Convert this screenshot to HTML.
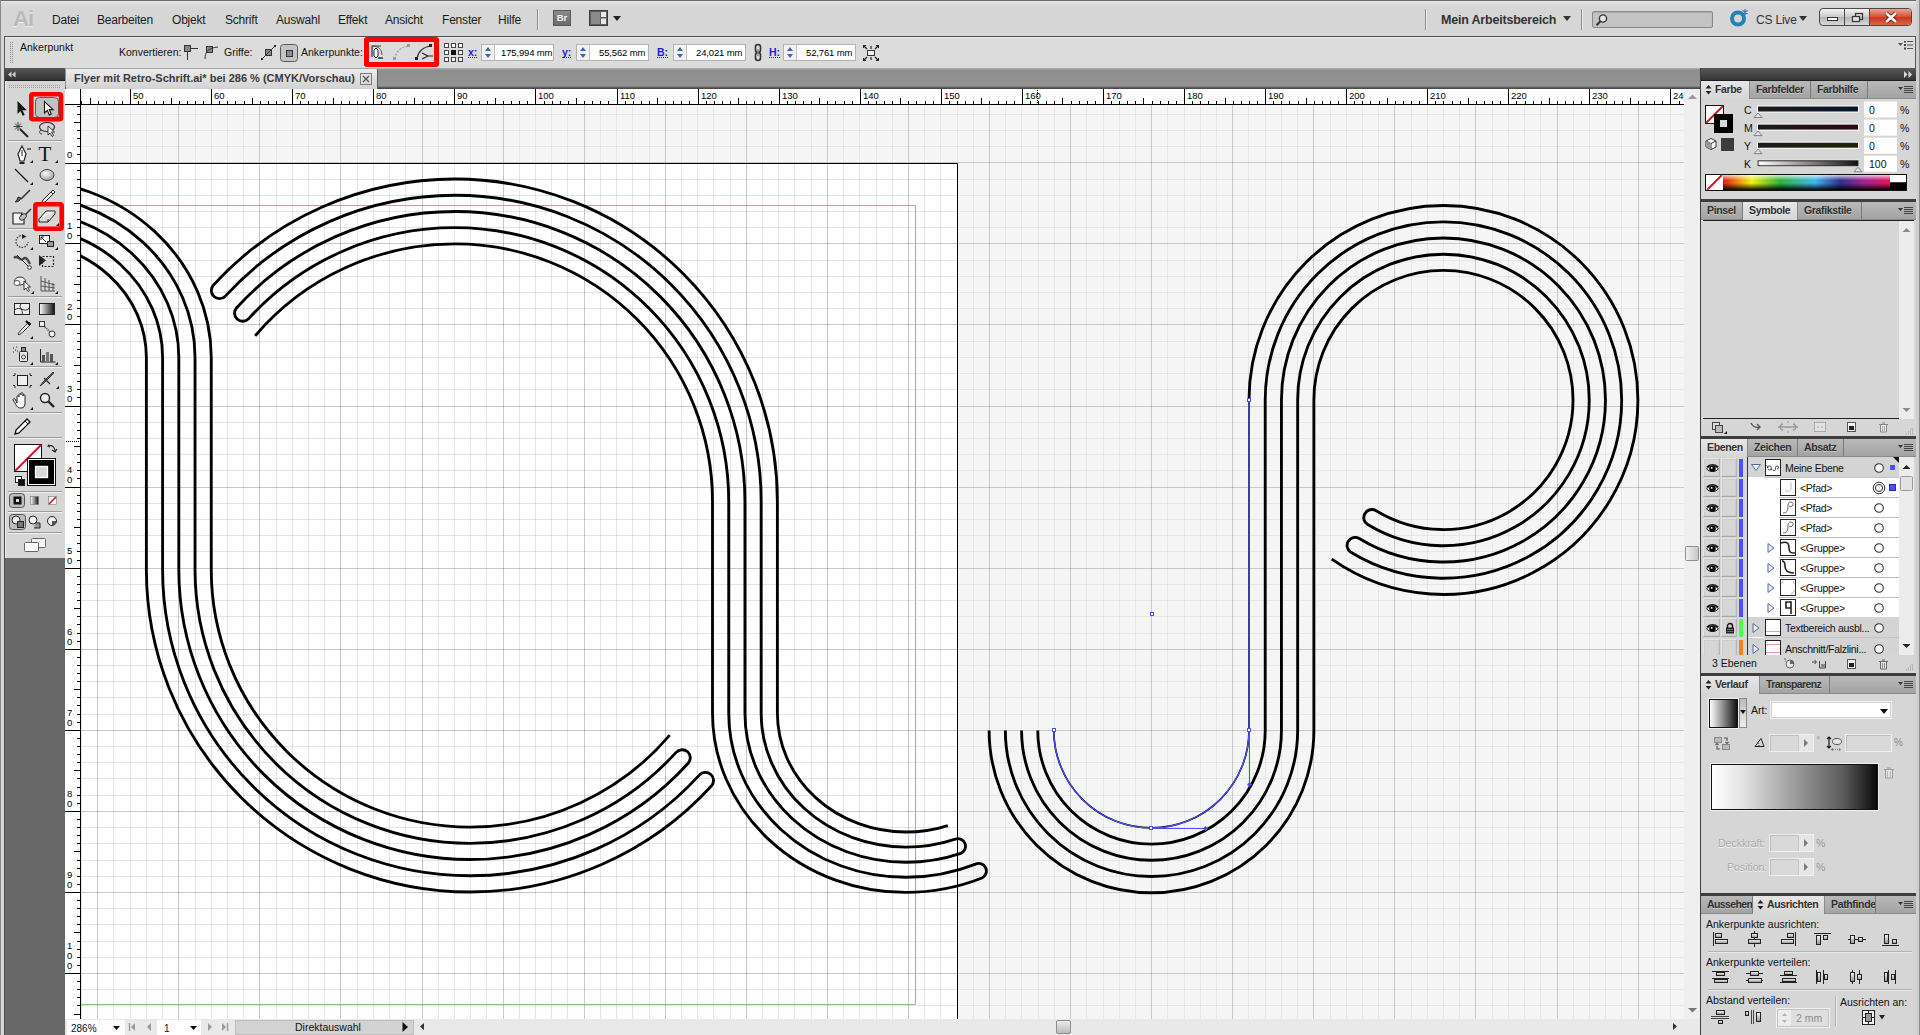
<!DOCTYPE html>
<html lang="de"><head><meta charset="utf-8"><title>Adobe Illustrator</title>
<style>
html,body{margin:0;padding:0;}
body{width:1920px;height:1035px;overflow:hidden;background:#d6d6d6;font-family:"Liberation Sans",sans-serif;font-size:11px;color:#111;}
#app{position:relative;width:1920px;height:1035px;overflow:hidden;background:#d6d6d6;}
.abs{position:absolute;}
/* ---------- top bars ---------- */
#winborder-top{position:absolute;left:0;top:0;width:1920px;height:1px;background:#6b6b6b;}
#winborder-l{position:absolute;left:0;top:0;width:1px;height:1035px;background:#8a8a8a;}
#winborder-r{position:absolute;left:1916px;top:0;width:4px;height:1035px;background:#cfcfcf;border-right:1px solid #8a8a8a;box-sizing:border-box;}
#menubar{position:absolute;left:1px;top:1px;width:1915px;height:35px;background:linear-gradient(#e6e6e6 0,#dadada 3px,#d6d6d6 8px,#d6d6d6 100%);}
#menubar .mi{position:absolute;top:11.5px;font-size:12px;letter-spacing:-0.2px;color:#1a1a1a;line-height:14px;white-space:nowrap;}
.vsep{position:absolute;width:1px;background:#8e8e8e;box-shadow:1px 0 0 #e9e9e9;}
#ctrlbar{position:absolute;left:4px;top:36px;width:1912px;height:32px;background:#dcdcdc;border-top:1px solid #4f4f4f;border-left:1px solid #5a5a5a;border-right:1px solid #5a5a5a;box-sizing:border-box;box-shadow:inset 0 1px 0 #ececec;}
#ctrlbar .t{position:absolute;font-size:10.5px;color:#111;white-space:nowrap;line-height:12px;}
#ctrlbar .lnk{position:absolute;font-size:10.5px;color:#2222d8;font-weight:bold;white-space:nowrap;line-height:12px;border-bottom:1px dotted #2222d8;height:11px;}
.fld{position:absolute;top:7px;height:17px;width:73px;background:#fff;border:1px solid #b4b4b4;box-sizing:border-box;font-size:9.5px;letter-spacing:-0.15px;line-height:15px;color:#000;}
.fld .sp{position:absolute;left:0;top:0;width:12px;height:15px;background:#f2f2f2;border-right:1px solid #c4c4c4;}
.fld .sp:before{content:"";position:absolute;left:3px;top:2px;border:3px solid transparent;border-top:0;border-bottom:4px solid #4a62b0;}
.fld .sp:after{content:"";position:absolute;left:3px;top:9px;border:3px solid transparent;border-bottom:0;border-top:4px solid #4a62b0;}
.fld span{position:absolute;left:19px;top:0;white-space:nowrap;}
#tabbar{position:absolute;left:65px;top:68px;width:1635px;height:21px;background:linear-gradient(#a8a8a8 0,#a8a8a8 1px,#8d8d8d 2px,#949494 18px,#6a6a6a 19px,#4c4c4c 20px,#4c4c4c 21px);}
#doctab{position:absolute;left:1px;top:1px;width:312px;height:20px;background:linear-gradient(#ececec,#d2d2d2);border-right:1px solid #5c5c5c;box-sizing:border-box;}
#doctab .tt{position:absolute;left:8px;top:3px;font-size:11px;font-weight:bold;color:#3a3a3a;white-space:nowrap;line-height:13px;letter-spacing:0;}
#doctab .cl{position:absolute;left:295px;top:4px;width:11px;height:11px;border:1px solid #7a7a7a;box-sizing:border-box;}
/* ---------- panels ---------- */
#dock{position:absolute;left:1700px;top:68px;width:216px;height:967px;background:#d6d6d6;border-left:1px solid #3e3e3e;box-sizing:border-box;overflow:hidden;}
#dock .hd{position:absolute;left:0;top:0;width:215px;height:13px;background:linear-gradient(#585858,#343434);border-bottom:1px solid #1e1e1e;box-sizing:border-box;}
.tabs{position:absolute;left:0;width:215px;height:17px;background:linear-gradient(#b9b9b9,#a3a3a3);border-top:3px solid #3e3e3e;border-bottom:1px solid #8a8a8a;box-sizing:content-box;}
.tabs.first{border-top:0;}
.tab{position:absolute;top:0;height:17px;box-sizing:border-box;border-right:1px solid #7a7a7a;font-size:10.5px;letter-spacing:-0.35px;font-weight:bold;color:#2f2f2f;line-height:16px;white-space:nowrap;text-shadow:0 1px 0 rgba(255,255,255,.35);overflow:hidden;}
.tab.on{background:linear-gradient(#e6e6e6,#d6d6d6);height:18px;border-right:1px solid #8a8a8a;}
.tab span{position:absolute;top:0;}
.pl{position:absolute;font-size:10.5px;line-height:12px;color:#111;white-space:nowrap;}
.pmenu{position:absolute;left:197px;top:5px;}
.wf{position:absolute;background:#fff;border:1px solid #c9c9c9;box-sizing:border-box;}
.df{position:absolute;background:#d9d9d9;border:1px solid #efefef;box-shadow:inset 1px 1px 0 #bdbdbd;box-sizing:border-box;}
.hr{position:absolute;left:7px;width:204px;height:1px;background:#b4b4b4;border-bottom:1px solid #e8e8e8;}
.lyr{position:absolute;left:0;width:198px;height:20px;}
.lyr .c1,.lyr .c2{position:absolute;top:0;width:17px;height:19px;background:#d6d6d6;border:1px solid #e4e4e4;border-right-color:#b6b6b6;border-bottom-color:#a8a8a8;box-sizing:border-box;box-shadow:inset 0 0 0 1px #cdcdcd;}
.lyr .c1{left:2px}.lyr .c2{left:20px;width:16px}
.lyr .cb{position:absolute;left:38px;top:1px;width:4px;height:18px;}
.lyr .nm{position:absolute;top:4px;letter-spacing:-0.3px;font-size:10.5px;line-height:12px;color:#111;white-space:nowrap;}
.lyr .th{position:absolute;top:1px;width:16px;height:17px;background:#fff;border:1px solid #222;box-sizing:border-box;}

</style></head>
<body>
<div id="app">
<svg class="cv" width="1920" height="1035" viewBox="0 0 1920 1035" style="position:absolute;left:0;top:0">
<defs><clipPath id="cvclip"><rect x="80" y="105" width="1604" height="915"/></clipPath><clipPath id="abclip"><rect x="80" y="164" width="877" height="856"/></clipPath><clipPath id="outclip"><path clip-rule="evenodd" d="M80 105H1684V1020H80zM80 164H957V1020H80z"/></clipPath></defs>
<g clip-path="url(#cvclip)">
<rect x="80" y="105" width="1604" height="915" fill="#f5f5f5"/>
<rect x="0" y="163.5" width="957.5" height="900" fill="#fff"/>
<defs><path id="gmin" d="M81.5 105V1020M113.5 105V1020M130.5 105V1020M146.5 105V1020M162.5 105V1020M195.5 105V1020M211.5 105V1020M227.5 105V1020M243.5 105V1020M276.5 105V1020M292.5 105V1020M308.5 105V1020M324.5 105V1020M357.5 105V1020M373.5 105V1020M389.5 105V1020M405.5 105V1020M438.5 105V1020M454.5 105V1020M470.5 105V1020M486.5 105V1020M519.5 105V1020M535.5 105V1020M551.5 105V1020M567.5 105V1020M600.5 105V1020M616.5 105V1020M632.5 105V1020M649.5 105V1020M681.5 105V1020M697.5 105V1020M713.5 105V1020M730.5 105V1020M762.5 105V1020M778.5 105V1020M794.5 105V1020M811.5 105V1020M843.5 105V1020M859.5 105V1020M876.5 105V1020M892.5 105V1020M924.5 105V1020M940.5 105V1020M957.5 105V1020M973.5 105V1020M1005.5 105V1020M1021.5 105V1020M1038.5 105V1020M1054.5 105V1020M1086.5 105V1020M1103.5 105V1020M1119.5 105V1020M1135.5 105V1020M1167.5 105V1020M1184.5 105V1020M1200.5 105V1020M1216.5 105V1020M1248.5 105V1020M1265.5 105V1020M1281.5 105V1020M1297.5 105V1020M1330.5 105V1020M1346.5 105V1020M1362.5 105V1020M1378.5 105V1020M1411.5 105V1020M1427.5 105V1020M1443.5 105V1020M1459.5 105V1020M1492.5 105V1020M1508.5 105V1020M1524.5 105V1020M1540.5 105V1020M1573.5 105V1020M1589.5 105V1020M1605.5 105V1020M1621.5 105V1020M1654.5 105V1020M1670.5 105V1020M80 114.5H1684M80 130.5H1684M80 146.5H1684M80 179.5H1684M80 195.5H1684M80 211.5H1684M80 227.5H1684M80 260.5H1684M80 276.5H1684M80 292.5H1684M80 308.5H1684M80 341.5H1684M80 357.5H1684M80 373.5H1684M80 389.5H1684M80 422.5H1684M80 438.5H1684M80 454.5H1684M80 470.5H1684M80 503.5H1684M80 519.5H1684M80 535.5H1684M80 551.5H1684M80 584.5H1684M80 600.5H1684M80 616.5H1684M80 633.5H1684M80 665.5H1684M80 681.5H1684M80 697.5H1684M80 714.5H1684M80 746.5H1684M80 762.5H1684M80 778.5H1684M80 795.5H1684M80 827.5H1684M80 843.5H1684M80 860.5H1684M80 876.5H1684M80 908.5H1684M80 924.5H1684M80 941.5H1684M80 957.5H1684M80 989.5H1684M80 1005.5H1684"/><path id="gmaj" d="M97.5 105V1020M178.5 105V1020M259.5 105V1020M340.5 105V1020M422.5 105V1020M503.5 105V1020M584.5 105V1020M665.5 105V1020M746.5 105V1020M827.5 105V1020M908.5 105V1020M989.5 105V1020M1070.5 105V1020M1151.5 105V1020M1232.5 105V1020M1313.5 105V1020M1394.5 105V1020M1475.5 105V1020M1557.5 105V1020M1638.5 105V1020M80 162.5H1684M80 243.5H1684M80 324.5H1684M80 406.5H1684M80 487.5H1684M80 568.5H1684M80 649.5H1684M80 730.5H1684M80 811.5H1684M80 892.5H1684M80 973.5H1684"/></defs>
<g clip-path="url(#abclip)" stroke="#000" stroke-width="1" fill="none"><use href="#gmin" stroke-opacity=".1"/><use href="#gmaj" stroke-opacity=".215"/></g>
<g clip-path="url(#outclip)" stroke="#000" stroke-width="1" fill="none"><use href="#gmin" stroke-opacity=".055"/><use href="#gmaj" stroke-opacity=".175"/></g>
<path d="M80 205.5H915.5V1004.5H80" fill="none" stroke="#8cbf88" stroke-width="1"/>
<path d="M80 163.5H957.5V1020" fill="none" stroke="#000" stroke-width="1"/>
<g fill="none" stroke="#000" stroke-width="2.86" stroke-linecap="butt">
<path d="M255.14 335.88 A260.9 257.5 0 0 1 455 243.9 A257.5 257.5 0 0 1 712.5 501.4 V713 A193.5 179.4 0 0 0 906 892.4 A193.5 179.4 0 0 0 981.92 878.02 M248.74 318.6 A277.12 273.72 0 0 1 455 227.68 A273.72 273.72 0 0 1 728.72 501.4 V713 A177.28 164.3 0 0 0 906 877.3 A177.28 164.3 0 0 0 975.55 864.13 M236.66 307.77 A293.34 289.94 0 0 1 455 211.46 A289.94 289.94 0 0 1 744.94 501.4 V713 A161.06 149.2 0 0 0 906 862.2 A161.06 149.2 0 0 0 960.82 853.29 M225.31 296.14 A309.56 306.16 0 0 1 455 195.24 A306.16 306.16 0 0 1 761.16 501.4 V713 A144.84 134.1 0 0 0 906 847.1 A144.84 134.1 0 0 0 955.3 839.09 M213.28 285.27 A325.78 322.38 0 0 1 455 179.02 A322.38 322.38 0 0 1 777.38 501.4 V713 A128.62 119 0 0 0 906 832 A128.62 119 0 0 0 947.87 825.52 M213.28 285.27 A8.11 8.11 0 0 0 225.31 296.14 M236.66 307.77 A8.11 8.11 0 0 0 248.74 318.6 M955.3 839.09 A7.62 7.62 0 0 1 960.82 853.29 M975.55 864.13 A7.64 7.64 0 0 1 981.92 878.02"/>
<path transform="rotate(180 462.5 535.5)" d="M255.29 335.88 A260.7 257.5 0 0 1 455 243.9 A258.75 257.5 0 0 1 713.75 501.4 V713.5 A193.5 178.3 0 0 0 907.25 891.8 A193.5 178.3 0 0 0 983.17 877.5 M248.89 318.6 A276.92 273.72 0 0 1 455 227.68 A274.97 273.72 0 0 1 729.97 501.4 V713.5 A177.28 162.85 0 0 0 907.25 876.35 A177.28 162.85 0 0 0 976.8 863.29 M236.81 307.77 A293.14 289.94 0 0 1 455 211.46 A291.19 289.94 0 0 1 746.19 501.4 V713.5 A161.06 147.4 0 0 0 907.25 860.9 A161.06 147.4 0 0 0 962.07 852.1 M225.46 296.14 A309.36 306.16 0 0 1 455 195.24 A307.41 306.16 0 0 1 762.41 501.4 V713.5 A144.84 131.95 0 0 0 907.25 845.45 A144.84 131.95 0 0 0 956.55 837.57 M213.43 285.27 A325.58 322.38 0 0 1 455 179.02 A323.63 322.38 0 0 1 778.63 501.4 V713.5 A128.62 116.5 0 0 0 907.25 830 A128.62 116.5 0 0 0 949.12 823.65 M213.43 285.27 A8.11 8.11 0 0 0 225.46 296.14 M236.81 307.77 A8.11 8.11 0 0 0 248.89 318.6 M956.55 837.57 A7.77 7.77 0 0 1 962.07 852.1 M976.8 863.29 A7.79 7.79 0 0 1 983.17 877.5"/>
<path d="M1249 400 A194.45 194.45 0 0 1 1637.9 400 A194.45 194.45 0 0 1 1331.78 559.19 M1037.78 730.4 A113.72 113.72 0 0 0 1265.22 730.4 V400 A178.23 178.23 0 0 1 1621.68 400 A178.23 178.23 0 0 1 1350.86 552.29 M1021.56 730.4 A129.94 129.94 0 0 0 1281.44 730.4 V400 A162.01 162.01 0 0 1 1605.46 400 A162.01 162.01 0 0 1 1359.28 538.43 M1005.34 730.4 A146.16 146.16 0 0 0 1297.66 730.4 V400 A145.79 145.79 0 0 1 1589.24 400 A145.79 145.79 0 0 1 1367.71 524.57 M989.12 730.4 A162.38 162.38 0 0 0 1313.88 730.4 V400 A129.57 129.57 0 0 1 1573.02 400 A129.57 129.57 0 0 1 1376.14 510.71 M1350.86 552.29 A8.11 8.11 0 0 1 1359.28 538.43 M1367.71 524.57 A8.11 8.11 0 0 1 1376.14 510.71"/>
</g>
<path d="M1053.8 730.4A97.6 97.6 0 0 0 1249 730.4V400" fill="none" stroke="#000" stroke-width="1.7"/>
<path d="M1053.8 730.4A97.6 97.6 0 0 0 1249 730.4V400" fill="none" stroke="#4d4dff" stroke-width="1.25"/>
<path d="M1151.5 828.5H1205 M1249.5 730V784" fill="none" stroke="#4d4dff" stroke-width="1"/>
<rect x="1052.5" y="728.5" width="3" height="3" fill="#fff" stroke="#4d4dff" stroke-width="1"/>
<rect x="1149.5" y="826.5" width="3" height="3" fill="#fff" stroke="#4d4dff" stroke-width="1"/>
<rect x="1247.5" y="728.5" width="3" height="3" fill="#fff" stroke="#4d4dff" stroke-width="1"/>
<rect x="1247.5" y="398.5" width="3" height="3" fill="#fff" stroke="#4d4dff" stroke-width="1"/>
<path d="M1203 828.5l2.500-2.500 2.500 2.500-2.500 2.500zM1249.500 782l2.500 2.500-2.500 2.500-2.500-2.500z" fill="#4d4dff"/>
<rect x="1150.5" y="612.5" width="3" height="3" fill="#fff" stroke="#4d4dff" stroke-width="1"/>
</g></svg>
<svg width="1920" height="1035" viewBox="0 0 1920 1035" style="position:absolute;left:0;top:0;pointer-events:none" font-family="Liberation Sans, sans-serif" font-size="9.5" fill="#000">
<rect x="65" y="89" width="1619" height="16" fill="#fff"/>
<rect x="65" y="89" width="16" height="930" fill="#fff"/>
<path d="M65 104.5H1684 M80.5 89V1019 M65 88.5H1684" stroke="#000" stroke-width="1" fill="none"/>
<text x="133" y="99">50</text>
<text x="214" y="99">60</text>
<text x="295" y="99">70</text>
<text x="376" y="99">80</text>
<text x="457" y="99">90</text>
<text x="538" y="99">100</text>
<text x="620" y="99">110</text>
<text x="701" y="99">120</text>
<text x="782" y="99">130</text>
<text x="863" y="99">140</text>
<text x="944" y="99">150</text>
<text x="1025" y="99">160</text>
<text x="1106" y="99">170</text>
<text x="1187" y="99">180</text>
<text x="1268" y="99">190</text>
<text x="1349" y="99">200</text>
<text x="1430" y="99">210</text>
<text x="1511" y="99">220</text>
<text x="1592" y="99">230</text>
<text x="1673" y="99">240</text>
<path d="M81.5 101V104M90.5 98V104M98.5 101V104M106.5 101V104M114.5 101V104M122.5 101V104M130.5 89V104M138.5 101V104M146.5 101V104M154.5 101V104M163.5 101V104M171.5 98V104M179.5 101V104M187.5 101V104M195.5 101V104M203.5 101V104M211.5 89V104M219.5 101V104M227.5 101V104M235.5 101V104M244.5 101V104M252.5 98V104M260.5 101V104M268.5 101V104M276.5 101V104M284.5 101V104M292.5 89V104M300.5 101V104M308.5 101V104M317.5 101V104M325.5 101V104M333.5 98V104M341.5 101V104M349.5 101V104M357.5 101V104M365.5 101V104M373.5 89V104M381.5 101V104M390.5 101V104M398.5 101V104M406.5 101V104M414.5 98V104M422.5 101V104M430.5 101V104M438.5 101V104M446.5 101V104M454.5 89V104M462.5 101V104M471.5 101V104M479.5 101V104M487.5 101V104M495.5 98V104M503.5 101V104M511.5 101V104M519.5 101V104M527.5 101V104M535.5 89V104M544.5 101V104M552.5 101V104M560.5 101V104M568.5 101V104M576.5 98V104M584.5 101V104M592.5 101V104M600.5 101V104M608.5 101V104M617.5 89V104M625.5 101V104M633.5 101V104M641.5 101V104M649.5 101V104M657.5 98V104M665.5 101V104M673.5 101V104M681.5 101V104M689.5 101V104M698.5 89V104M706.5 101V104M714.5 101V104M722.5 101V104M730.5 101V104M738.5 98V104M746.5 101V104M754.5 101V104M762.5 101V104M771.5 101V104M779.5 89V104M787.5 101V104M795.5 101V104M803.5 101V104M811.5 101V104M819.5 98V104M827.5 101V104M835.5 101V104M844.5 101V104M852.5 101V104M860.5 89V104M868.5 101V104M876.5 101V104M884.5 101V104M892.5 101V104M900.5 98V104M908.5 101V104M916.5 101V104M925.5 101V104M933.5 101V104M941.5 89V104M949.5 101V104M957.5 101V104M965.5 101V104M973.5 101V104M981.5 98V104M989.5 101V104M998.5 101V104M1006.5 101V104M1014.5 101V104M1022.5 89V104M1030.5 101V104M1038.5 101V104M1046.5 101V104M1054.5 101V104M1062.5 98V104M1071.5 101V104M1079.5 101V104M1087.5 101V104M1095.5 101V104M1103.5 89V104M1111.5 101V104M1119.5 101V104M1127.5 101V104M1135.5 101V104M1143.5 98V104M1152.5 101V104M1160.5 101V104M1168.5 101V104M1176.5 101V104M1184.5 89V104M1192.5 101V104M1200.5 101V104M1208.5 101V104M1216.5 101V104M1225.5 98V104M1233.5 101V104M1241.5 101V104M1249.5 101V104M1257.5 101V104M1265.5 89V104M1273.5 101V104M1281.5 101V104M1289.5 101V104M1298.5 101V104M1306.5 98V104M1314.5 101V104M1322.5 101V104M1330.5 101V104M1338.5 101V104M1346.5 89V104M1354.5 101V104M1362.5 101V104M1370.5 101V104M1379.5 101V104M1387.5 98V104M1395.5 101V104M1403.5 101V104M1411.5 101V104M1419.5 101V104M1427.5 89V104M1435.5 101V104M1443.5 101V104M1452.5 101V104M1460.5 101V104M1468.5 98V104M1476.5 101V104M1484.5 101V104M1492.5 101V104M1500.5 101V104M1508.5 89V104M1516.5 101V104M1525.5 101V104M1533.5 101V104M1541.5 101V104M1549.5 98V104M1557.5 101V104M1565.5 101V104M1573.5 101V104M1581.5 101V104M1589.5 89V104M1597.5 101V104M1606.5 101V104M1614.5 101V104M1622.5 101V104M1630.5 98V104M1638.5 101V104M1646.5 101V104M1654.5 101V104M1662.5 101V104M1670.5 89V104M1679.5 101V104" stroke="#000" stroke-width="1" fill="none"/>
<text x="67" y="158">0</text>
<text x="67" y="229">1</text>
<text x="67" y="239">0</text>
<text x="67" y="310">2</text>
<text x="67" y="320">0</text>
<text x="67" y="392">3</text>
<text x="67" y="402">0</text>
<text x="67" y="473">4</text>
<text x="67" y="483">0</text>
<text x="67" y="554">5</text>
<text x="67" y="564">0</text>
<text x="67" y="635">6</text>
<text x="67" y="645">0</text>
<text x="67" y="716">7</text>
<text x="67" y="726">0</text>
<text x="67" y="797">8</text>
<text x="67" y="807">0</text>
<text x="67" y="878">9</text>
<text x="67" y="888">0</text>
<text x="67" y="949">1</text>
<text x="67" y="959">0</text>
<text x="67" y="969">0</text>
<path d="M77 106.5H80M77 114.5H80M74 122.5H80M77 130.5H80M77 138.5H80M77 146.5H80M77 154.5H80M65 163.5H80M77 170.5H80M77 179.5H80M77 187.5H80M77 195.5H80M74 203.5H80M77 211.5H80M77 219.5H80M77 227.5H80M77 235.5H80M65 243.5H80M77 251.5H80M77 260.5H80M77 268.5H80M77 276.5H80M74 284.5H80M77 292.5H80M77 300.5H80M77 308.5H80M77 316.5H80M65 324.5H80M77 333.5H80M77 341.5H80M77 349.5H80M77 357.5H80M74 365.5H80M77 373.5H80M77 381.5H80M77 389.5H80M77 397.5H80M65 406.5H80M77 414.5H80M77 422.5H80M77 430.5H80M77 438.5H80M74 446.5H80M77 454.5H80M77 462.5H80M77 470.5H80M77 478.5H80M65 487.5H80M77 495.5H80M77 503.5H80M77 511.5H80M77 519.5H80M74 527.5H80M77 535.5H80M77 543.5H80M77 551.5H80M77 560.5H80M65 568.5H80M77 576.5H80M77 584.5H80M77 592.5H80M77 600.5H80M74 608.5H80M77 616.5H80M77 624.5H80M77 633.5H80M77 641.5H80M65 649.5H80M77 657.5H80M77 665.5H80M77 673.5H80M77 681.5H80M74 689.5H80M77 697.5H80M77 705.5H80M77 714.5H80M77 722.5H80M65 730.5H80M77 738.5H80M77 746.5H80M77 754.5H80M77 762.5H80M74 770.5H80M77 778.5H80M77 787.5H80M77 795.5H80M77 803.5H80M65 811.5H80M77 819.5H80M77 827.5H80M77 835.5H80M77 843.5H80M74 851.5H80M77 860.5H80M77 868.5H80M77 876.5H80M77 884.5H80M65 892.5H80M77 900.5H80M77 908.5H80M77 916.5H80M77 924.5H80M74 932.5H80M77 941.5H80M77 949.5H80M77 957.5H80M77 965.5H80M65 973.5H80M77 981.5H80M77 989.5H80M77 997.5H80M77 1005.5H80M74 1014.5H80" stroke="#000" stroke-width="1" fill="none"/>
<path d="M66 441.5H80" stroke="#000" stroke-width="1" stroke-dasharray="1 1" fill="none"/>
<path d="M1037.5 90V104" stroke="#000" stroke-width="1" stroke-dasharray="1 1" fill="none"/>
</svg>
<div id="winborder-top"></div><div id="winborder-l"></div><div id="winborder-r"></div>
<div id="menubar">
  <svg class="abs" style="left:11px;top:6px" width="30" height="24" viewBox="0 0 30 24"><text x="1" y="20" font-family="Liberation Sans, sans-serif" font-weight="bold" font-size="22" fill="#f0f0f0" letter-spacing="-1">Ai</text><text x="1" y="19" font-family="Liberation Sans, sans-serif" font-weight="bold" font-size="22" fill="#b9b9b9" letter-spacing="-1">Ai</text></svg>
  <span class="mi" style="left:51px">Datei</span>
  <span class="mi" style="left:96px">Bearbeiten</span>
  <span class="mi" style="left:171px">Objekt</span>
  <span class="mi" style="left:224px">Schrift</span>
  <span class="mi" style="left:275px">Auswahl</span>
  <span class="mi" style="left:337px">Effekt</span>
  <span class="mi" style="left:384px">Ansicht</span>
  <span class="mi" style="left:441px">Fenster</span>
  <span class="mi" style="left:497px">Hilfe</span>
  <div class="vsep" style="left:536px;top:8px;height:21px"></div>
  <div class="abs" style="left:552px;top:9px;width:18px;height:16px;background:linear-gradient(#8a8a8a,#6a6a6a);border:1px solid #5a5a5a;box-sizing:border-box;color:#f2f2f2;font-size:9.5px;font-weight:bold;line-height:14px;text-align:center">Br</div>
  <svg class="abs" style="left:588px;top:9px" width="34" height="17" viewBox="0 0 34 17"><rect x=".5" y=".5" width="18" height="15" fill="#5e5e5e" stroke="#3c3c3c"/><rect x="2" y="2" width="9" height="12" fill="#8a8a8a"/><rect x="12" y="2" width="5" height="5" fill="#e8e8e8"/><rect x="12" y="8.5" width="5" height="5.5" fill="#e8e8e8"/><path d="M24 6h8l-4 5z" fill="#222"/></svg>
  <div class="vsep" style="left:1424px;top:8px;height:21px"></div>
  <span class="mi" style="left:1440px;font-weight:bold;color:#333;font-size:12.5px">Mein Arbeitsbereich</span>
  <svg class="abs" style="left:1561px;top:14px" width="10" height="7"><path d="M1 1h8l-4 5z" fill="#333"/></svg>
  <div class="vsep" style="left:1580px;top:8px;height:21px"></div>
  <div class="abs" style="left:1591px;top:10px;width:121px;height:17px;background:#c3c3c3;border:1px solid #8a8a8a;border-radius:2px;box-sizing:border-box;box-shadow:inset 0 1px 1px #aaa"></div>
  <svg class="abs" style="left:1594px;top:12px" width="14" height="14" viewBox="0 0 14 14"><circle cx="8" cy="5.5" r="3.6" fill="#e6e6e6" stroke="#333" stroke-width="1.4"/><path d="M5.4 8.2L1.5 12.2" stroke="#333" stroke-width="2"/></svg>
  <svg class="abs" style="left:1726px;top:6px" width="24" height="22" viewBox="0 0 24 22"><circle cx="11" cy="11.5" r="6" fill="none" stroke="#1d84b5" stroke-width="4"/><path d="M18 2v6M15.4 3.5l5.2 3M15.4 6.5l5.2-3" stroke="#1d84b5" stroke-width="1.2"/></svg>
  <span class="mi" style="left:1755px;color:#333">CS Live</span>
  <svg class="abs" style="left:1797px;top:14px" width="10" height="7"><path d="M1 1h8l-4 5z" fill="#333"/></svg>
  <div class="abs" style="left:1818px;top:7px;width:93px;height:18px;border:1px solid #4a4a4a;border-radius:4px;box-sizing:border-box;overflow:hidden;background:linear-gradient(#f4f4f4,#c9c9c9 50%,#b4b4b4 51%,#d8d8d8)">
    <div class="abs" style="left:24px;top:0;width:1px;height:16px;background:#4a4a4a"></div>
    <div class="abs" style="left:49px;top:0;width:1px;height:16px;background:#4a4a4a"></div>
    <div class="abs" style="left:50px;top:0;width:42px;height:16px;background:linear-gradient(#e8a392,#d9573c 45%,#c8381d 55%,#d9664e)"></div>
    <svg class="abs" style="left:0;top:0" width="92" height="16" viewBox="0 0 92 16"><rect x="7.500" y="8.500" width="10" height="3" fill="#fff" stroke="#333"/><rect x="35.500" y="4.500" width="7" height="6" fill="none" stroke="#333" stroke-width="1.200"/><rect x="32.500" y="7.500" width="7" height="5" fill="#e0e0e0" stroke="#333" stroke-width="1.200"/><path d="M66 4l10 9M76 4l-10 9" stroke="#5a1a10" stroke-width="4.200"/><path d="M66 4l10 9M76 4l-10 9" stroke="#fff" stroke-width="2.600"/></svg>
  </div>
</div>
<div id="ctrlbar">
  <svg class="abs" style="left:5px;top:5px" width="5" height="22" viewBox="0 0 5 22"><path d="M.5 0v22M2.500 0v22" stroke="#8a8a8a" stroke-width="1" stroke-dasharray="1 1"/></svg>
  <span class="t" style="left:15px;top:4px">Ankerpunkt</span>
  <span class="t" style="left:114px;top:9px">Konvertieren:</span>
  <svg class="abs" style="left:177px;top:6px" width="40" height="18" viewBox="0 0 40 18"><rect x="2.500" y="2.500" width="6" height="6" fill="#888" stroke="#333"/><path d="M5.500 9v8M9 5.500h7" stroke="#333"/><rect x="24.500" y="3.500" width="6" height="6" fill="#888" stroke="#333"/><path d="M23 16c0-6 2-11 13-12" fill="none" stroke="#333"/></svg>
  <span class="t" style="left:219px;top:9px">Griffe:</span>
  <svg class="abs" style="left:255px;top:6px" width="42" height="20" viewBox="0 0 42 20"><rect x="5.500" y="6.500" width="6" height="6" fill="#888" stroke="#333"/><path d="M2 16L15 3" stroke="#333"/><rect x="1" y="15" width="2" height="2" fill="#222"/><rect x="14" y="2" width="2" height="2" fill="#222"/><rect x="20.500" y="1.500" width="17" height="17" rx="3" fill="#c4c4c4" stroke="#5a5a5a"/><rect x="26.500" y="7.500" width="6" height="6" fill="#8c8c8c" stroke="#333"/></svg>
  <span class="t" style="left:296px;top:9px">Ankerpunkte:</span>
  <div class="abs" style="left:359px;top:0px;width:75px;height:30px;border:5px solid #ff0000;border-radius:3px;box-sizing:border-box"></div>
  <svg class="abs" style="left:364px;top:5px" width="66" height="22" viewBox="0 0 66 22"><path d="M3 15V4h9" fill="none" stroke="#333" stroke-width="1.200"/><path d="M3 4c6 0 10 3 10 9" fill="none" stroke="#555"/><path d="M7 6l2 2v6l-2 2-2-2V8z" fill="#fff" stroke="#222"/><path d="M9 16h5" stroke="#222" stroke-width="1.400"/><path d="M26 17C27 9 32 5 40 4" fill="none" stroke="#a0a0a0" stroke-width="1.400" stroke-dasharray="2 1.500"/><rect x="24" y="15" width="3" height="3" fill="#999"/><rect x="38" y="2" width="3" height="3" fill="#999"/><path d="M48 17C49 9 54 5 62 4" fill="none" stroke="#333" stroke-width="1.200"/><rect x="46" y="15" width="3" height="3" fill="#222"/><rect x="60" y="2" width="3" height="3" fill="#222"/><path d="M53 11l6 3-6 3M58 14h6" fill="none" stroke="#222" stroke-width="1.200"/></svg>
  <svg class="abs" style="left:439px;top:6px" width="20" height="20" viewBox="0 0 20 20"><g fill="#fff" stroke="#444"><rect x=".5" y=".5" width="4" height="4"/><rect x="7.500" y=".5" width="4" height="4"/><rect x="14.500" y=".5" width="4" height="4"/><rect x=".5" y="7.500" width="4" height="4"/><rect x="14.500" y="7.500" width="4" height="4"/><rect x=".5" y="14.500" width="4" height="4"/><rect x="7.500" y="14.500" width="4" height="4"/><rect x="14.500" y="14.500" width="4" height="4"/></g><rect x="7" y="7" width="5" height="5" fill="#111"/></svg>
  <span class="lnk" style="left:463px;top:9px">x:</span>
  <div class="fld" style="left:476px"><i class="sp"></i><span>175,994 mm</span></div>
  <span class="lnk" style="left:557px;top:9px">y:</span>
  <div class="fld" style="left:571px"><i class="sp"></i><span style="left:22px">55,562 mm</span></div>
  <span class="lnk" style="left:652px;top:9px">B:</span>
  <div class="fld" style="left:668px"><i class="sp"></i><span style="left:22px">24,021 mm</span></div>
  <svg class="abs" style="left:748px;top:6px" width="10" height="20" viewBox="0 0 10 20"><rect x="2.500" y="1.500" width="5" height="8" rx="2.500" fill="none" stroke="#333" stroke-width="1.600"/><rect x="2.500" y="9.500" width="5" height="8" rx="2.500" fill="none" stroke="#333" stroke-width="1.600"/><path d="M5 6v7" stroke="#888" stroke-width="1.400"/></svg>
  <span class="lnk" style="left:764px;top:9px">H:</span>
  <div class="fld" style="left:778px"><i class="sp"></i><span style="left:22px">52,761 mm</span></div>
  <svg class="abs" style="left:858px;top:8px" width="16" height="16" viewBox="0 0 16 16"><rect x="4.500" y="5.500" width="7" height="5" fill="#eee" stroke="#333"/><path d="M1 1l3 3M15 1l-3 3M1 15l3-3M15 15l-3-3M8 1v3M8 15v-3" stroke="#222" stroke-width="1.200"/><path d="M0 0h3v1H1v2H0zM16 0h-3v1h2v2h1zM0 16h3v-1H1v-2H0zM16 16h-3v-1h2v-2h1z" fill="#222"/></svg>
  <svg class="abs" style="left:1893px;top:4px" width="16" height="9" viewBox="0 0 16 9"><path d="M0 2h5l-2.500 3z" fill="#555"/><path d="M6 .5h2M6 4h2M6 7.500h2" stroke="#444" stroke-width="2"/><path d="M9 .5h6M9 4h6M9 7.500h6" stroke="#555" stroke-width="1"/></svg>
</div>
<div id="tabbar">
  <div id="doctab"><span class="tt">Flyer mit Retro-Schrift.ai* bei 286 % (CMYK/Vorschau)</span>
    <svg class="abs" style="left:294px;top:4px" width="13" height="13" viewBox="0 0 13 13"><rect x=".5" y=".5" width="11" height="11" fill="none" stroke="#7d7d7d"/><path d="M3 3l6 6M9 3l-6 6" stroke="#555" stroke-width="1.300"/></svg>
  </div>
</div>

<div class="abs" style="left:4px;top:68px;width:61px;height:967px;background:#686868;border-left:1px solid #4a4a4a;box-sizing:border-box"></div>
<div class="abs" style="left:5px;top:68px;width:60px;height:13px;background:linear-gradient(#555,#333);border-bottom:1px solid #222;box-sizing:border-box"></div>
<div class="abs" style="left:5px;top:81px;width:60px;height:477px;background:#d6d6d6;box-shadow:inset 1px 0 0 #ececec"></div>
<svg class="abs" style="left:5px;top:68px" width="60" height="492" viewBox="5 68 60 492">
 <path d="M11.500 71.500v6l-3.500-3zM15.500 71.500v6l-3.500-3z" fill="#d0d0d0"/>
 <path d="M9 85.500h52M9 87.500h52" stroke="#999" stroke-dasharray="1 1"/>
 <g stroke="#9c9c9c" stroke-width="1"><path d="M8 140.500h54M8 228.500h54M8 296.500h54M8 341.500h54M8 366.500h54M8 412.500h54M8 437.500h54M8 491.500h54M8 511.500h54M8 532.500h54"/></g>
 <g stroke="#f0f0f0" stroke-width="1"><path d="M8 141.500h54M8 229.500h54M8 297.500h54M8 342.500h54M8 367.500h54M8 413.500h54M8 438.500h54M8 492.500h54M8 512.500h54M8 533.500h54"/></g>
 <!-- row 1: selection / direct selection -->
 <path d="M17.500 101v13l3-3 2.200 4.800 2-.9-2.200-4.700h4.200z" fill="#111"/>
 <rect x="35.500" y="97.500" width="23" height="20" rx="4" fill="#c2c2c2" stroke="#5c5c5c"/>
 <path d="M44.500 101.500v11.500l2.800-2.600 2 4.500 1.900-.9-2-4.400h3.900z" fill="#fff" stroke="#111" stroke-width="1.100"/>
 <path d="M58 119l3 0 0-3z" fill="#111"/>
 <rect x="31.300" y="94.300" width="29.700" height="25" rx="1.500" fill="none" stroke="#ff0000" stroke-width="4.600"/>
 <!-- row 2: magic wand / lasso -->
 <path d="M20 129l8 8" stroke="#222" stroke-width="2"/><path d="M18 122v9M13.500 126.500h9M15 123.500l6 6M21 123.500l-6 6" stroke="#333" stroke-width=".9"/>
 <ellipse cx="47" cy="127" rx="7.500" ry="4.500" fill="none" stroke="#333" stroke-width="1.200"/><path d="M41 130c-2 1-2 4 1 4" fill="none" stroke="#333"/><path d="M48 126v9l2-2 2 3.500 1.500-1-2-3.500h3z" fill="#fff" stroke="#222" stroke-width=".9"/>
 <!-- row 3: pen / type -->
 <path d="M22 146l-4 8 2 7h4l2-7z" fill="#fff" stroke="#222" stroke-width="1.200"/><path d="M22 150v6" stroke="#222"/><path d="M19.500 162h5v2h-5z" fill="#222"/><path d="M27 149h4" stroke="#222" stroke-width="1.200"/><path d="M30 163h3v-3z" fill="#111"/>
 <text x="38.500" y="161" font-family="Liberation Serif, serif" font-size="21" fill="#111">T</text><path d="M55 163h3v-3z" fill="#111"/>
 <!-- row 4: line / ellipse -->
 <path d="M15 169l13 13" stroke="#111" stroke-width="1.300"/><path d="M30 185h3v-3z" fill="#111"/>
 <defs><radialGradient id="elg" cx=".4" cy=".35" r=".7"><stop offset="0" stop-color="#fff"/><stop offset="1" stop-color="#9a9a9a"/></radialGradient><linearGradient id="grd" x1="0" x2="1"><stop offset="0" stop-color="#fff"/><stop offset="1" stop-color="#111"/></linearGradient></defs>
 <ellipse cx="47" cy="175" rx="7" ry="5.500" fill="url(#elg)" stroke="#444"/><path d="M55 185h3v-3z" fill="#111"/>
 <!-- row 5: brush / pencil -->
 <path d="M30 190l-9 9" stroke="#333" stroke-width="1.600"/><path d="M21 198c-1 3-3 4-6 4 2-1 2-3 3-5z" fill="#555" stroke="#222" stroke-width=".8"/>
 <path d="M53 190l-10 10-2 4 4-2 10-10z" fill="#f4f4f4" stroke="#222" stroke-width="1"/><path d="M51 192l2 2" stroke="#222"/>
 <!-- row 6: blob brush / eraser -->
 <path d="M13 213h9l-1 3 3 3v5h-11z" fill="#f2f2f2" stroke="#222" stroke-width="1.200"/><path d="M31 209l-7 7" stroke="#333" stroke-width="1.400"/><ellipse cx="23" cy="217" rx="4" ry="2.500" transform="rotate(-40 23 217)" fill="#bbb" stroke="#222" stroke-width=".8"/>
 <path d="M39 219l7-8h9l-7 8z" fill="#f4f4f4" stroke="#222"/><path d="M39 219v3h9l7-8v-3" fill="#ddd" stroke="#222"/><path d="M48 219v3" stroke="#222"/><path d="M56 226h3v-3z" fill="#111"/>
 <rect x="35.300" y="204.300" width="26.400" height="24.400" rx="1.500" fill="none" stroke="#ff0000" stroke-width="4.600"/>
 <!-- row 7: rotate / scale -->
 <path d="M26 237a6 6 0 1 0 2 5" fill="none" stroke="#333" stroke-width="1.200" stroke-dasharray="1.500 1.300"/><path d="M22 234l4 2.500-4 2.500z" fill="#222"/><path d="M30 250h3v-3z" fill="#111"/>
 <rect x="39.500" y="235.500" width="10" height="8" fill="#fff" stroke="#222"/><rect x="47.500" y="241.500" width="6" height="5" fill="#999" stroke="#222"/><path d="M41 237l5 5M41 237h3M41 237v3" stroke="#222" stroke-width="1" fill="none"/><path d="M55 250h3v-3z" fill="#111"/>
 <!-- row 8: warp / free transform -->
 <path d="M14 258c4-4 6 4 9 1s5 1 7 5" fill="none" stroke="#444" stroke-width="2.200"/><path d="M17 255l12 12" stroke="#222" stroke-width="1"/><circle cx="29.500" cy="267.500" r="1.800" fill="#fff" stroke="#222"/>
 <rect x="42.500" y="256.500" width="11" height="10" fill="none" stroke="#222" stroke-dasharray="2 1.500" stroke-width="1.200"/><path d="M39 255v11l7-5.500z" fill="#222"/>
 <!-- row 9: shape builder / perspective -->
 <ellipse cx="20" cy="281" rx="5.500" ry="4" fill="#eee" stroke="#333"/><ellipse cx="17" cy="283" rx="3" ry="2.500" fill="#fff" stroke="#333" stroke-width=".8"/><path d="M24 281v9l2-2 2 3.500 1.500-1-2-3.500h3z" fill="#fff" stroke="#222" stroke-width=".9"/><path d="M31 294h3v-3z" fill="#111"/>
 <path d="M41 276v15h14M45 278v13M49 280v11M53 283v8M41 281l14 4M41 286l14 2" fill="none" stroke="#555" stroke-width="1"/><path d="M55 294h3v-3z" fill="#111"/>
 <!-- row 10: mesh / gradient -->
 <rect x="14.500" y="303.500" width="15" height="11" fill="#eee" stroke="#222"/><path d="M14.500 310c5-5 10 4 15-2M21 303.500c-3 4 3 7 1 11" fill="none" stroke="#222" stroke-width=".9"/>
 <rect x="39.500" y="303.500" width="15" height="11" fill="url(#grd)" stroke="#222"/>
 <!-- row 11: eyedropper / blend -->
 <path d="M29 322l-8 8-3 4 1 1 4-3 8-8z" fill="#eee" stroke="#222" stroke-width=".9"/><path d="M26 321l4 4" stroke="#111" stroke-width="2.400"/><path d="M30 339h3v-3z" fill="#111"/>
 <rect x="39.500" y="321.500" width="5" height="5" fill="#eee" stroke="#333"/><circle cx="52" cy="334" r="3" fill="#eee" stroke="#333"/><path d="M45 327l5 5" stroke="#555" stroke-dasharray="1 1" stroke-width="2"/>
 <!-- row 12: symbol sprayer / graph -->
 <rect x="19.500" y="351.500" width="8" height="10" rx="1" fill="#e8e8e8" stroke="#222"/><rect x="21.500" y="347.500" width="4" height="4" fill="#888" stroke="#222"/><circle cx="23.500" cy="357" r="2" fill="none" stroke="#222" stroke-width=".8"/><path d="M13 348h1M15 350h1M13 352h1M16 347h1M17 351h1" stroke="#222"/><path d="M30 365h3v-3z" fill="#111"/>
 <path d="M40.500 349v13h15" fill="none" stroke="#222"/><rect x="42" y="355" width="3" height="7" fill="#555"/><rect x="46" y="352" width="3" height="10" fill="#777"/><rect x="50" y="354" width="3" height="8" fill="#555"/><path d="M55 365h3v-3z" fill="#111"/>
 <!-- row 13: artboard / slice -->
 <rect x="17.500" y="375.500" width="10" height="10" fill="#eee" stroke="#222"/><path d="M15 373v2M15 386v2M30 373v2M30 386v2M13 375.500h2M13 385.500h2M30 375.500h2M30 385.500h2" stroke="#222"/>
 <path d="M54 373l-10 10-4 3 3-4 10-10z" fill="#666" stroke="#222" stroke-width=".8"/><path d="M44 378l6 6" stroke="#222" stroke-width="1.200"/><path d="M56 389h3v-3z" fill="#111"/>
 <!-- row 14: hand / zoom -->
 <path d="M17 403v-6c0-2 2-2 2 0v-2c0-2 2-2 2 0v-1c0-2 2-2 2 0v2c0-2 2-2 2 0v7c0 3-1 5-4 5s-4-1-6-5l-2-3c0-1 1-2 2-1z" fill="#fff" stroke="#222" stroke-width="1"/><path d="M30 410h3v-3z" fill="#111"/>
 <circle cx="45" cy="398" r="4.500" fill="#eee" stroke="#222" stroke-width="1.400"/><path d="M48.500 401.500l5.500 5.500" stroke="#222" stroke-width="2.400"/>
 <!-- row 15: measure-like pen -->
 <path d="M27 419l3 3-11 11-4 1 1-4z" fill="#fff" stroke="#111" stroke-width="1.300"/><path d="M25 421l3 3" stroke="#111"/>
 <!-- fill / stroke -->
 <rect x="14.500" y="444.500" width="27" height="27" fill="#fff" stroke="#111"/><path d="M15 471L41 445" stroke="#d4142a" stroke-width="2"/>
 <rect x="27.500" y="458.500" width="28" height="27" fill="#fff" stroke="#111"/><rect x="29" y="460" width="25" height="24" fill="#000"/><rect x="35.500" y="466.500" width="12" height="11" fill="#d8d8d8" stroke="#fff" stroke-width="1.400"/>
 <path d="M49 446c3-1 6 1 6 5M57 449l-2 3-3-2" fill="none" stroke="#222" stroke-width="1.200"/><path d="M49 444l-2 2.500 3 1z" fill="#222"/>
 <rect x="15.500" y="476.500" width="6" height="6" fill="#fff" stroke="#222"/><rect x="18.500" y="479.500" width="6" height="6" fill="#111" stroke="#222"/>
 <!-- color / gradient / none -->
 <rect x="9.500" y="493.500" width="15" height="14" rx="3" fill="#bdbdbd" stroke="#555"/><rect x="13.500" y="496.500" width="8" height="8" fill="#111"/><rect x="16" y="499" width="3" height="3" fill="#ddd"/>
 <rect x="30.500" y="496.500" width="8" height="8" fill="url(#grd)" stroke="#777" stroke-width=".6"/>
 <rect x="48.500" y="496.500" width="8" height="8" fill="#fff" stroke="#777" stroke-width=".6"/><path d="M49 504l7-7" stroke="#d4142a" stroke-width="1.600"/>
 <!-- draw modes -->
 <rect x="9.500" y="514.500" width="16" height="15" rx="3" fill="#bdbdbd" stroke="#555"/><circle cx="16" cy="520" r="4" fill="#f0f0f0" stroke="#222"/><rect x="17.500" y="521.500" width="6" height="6" fill="#777" stroke="#222"/>
 <circle cx="33" cy="520" r="4" fill="#f0f0f0" stroke="#222"/><path d="M35 523h5v5h-6" fill="#999" stroke="#222"/>
 <circle cx="52" cy="521" r="4.500" fill="#f0f0f0" stroke="#222"/><path d="M52 521h4.500a4.500 4.500 0 0 1-4.500 4.500z" fill="#555"/>
 <!-- screen mode -->
 <rect x="31.500" y="538.500" width="14" height="9" rx="1" fill="#f4f4f4" stroke="#666"/><rect x="24.500" y="542.500" width="14" height="9" rx="1" fill="#fff" stroke="#666"/>
</svg>

<div id="dock"><div class="hd"><svg class="abs" style="left:203px;top:3px" width="9" height="7"><path d="M0 0l3.500 3.500L0 7zM4.500 0L8 3.500 4.500 7z" fill="#d8d8d8"/></svg></div>
<div class="tabs first" style="top:13px">
<div class="tab on" style="left:0px;width:49px"><svg class="abs" style="left:4px;top:4px" width="7" height="10" viewBox="0 0 7 10"><path d="M3.500 0L6.500 3.500H.5zM3.500 9.500L6.500 6H.5z" fill="#222"/></svg><span style="left:14px">Farbe</span></div>
<div class="tab" style="left:49px;width:61px"><span style="left:6px">Farbfelder</span></div>
<div class="tab" style="left:110px;width:57px"><span style="left:6px">Farbhilfe</span></div>
<svg class="pmenu" width="16" height="8" viewBox="0 0 16 8"><path d="M0 1h5l-2.500 3z" fill="#333"/><path d="M6 .5h9M6 2.500h9M6 4.500h9M6 6.500h9" stroke="#444" stroke-width="1"/></svg>
</div>
<svg class="abs" style="left:0;top:30px" width="215" height="100" viewBox="1701 98 215 100">
<defs><linearGradient id="gc" x1="0" x2="1"><stop offset="0" stop-color="#1b1b1b"/><stop offset="1" stop-color="#08152a"/></linearGradient><linearGradient id="gm" x1="0" x2="1"><stop offset="0" stop-color="#1b1b1b"/><stop offset="1" stop-color="#2a0814"/></linearGradient><linearGradient id="gy" x1="0" x2="1"><stop offset="0" stop-color="#1b1b1b"/><stop offset="1" stop-color="#22220a"/></linearGradient><linearGradient id="gk" x1="0" x2="1"><stop offset="0" stop-color="#fff"/><stop offset="1" stop-color="#111"/></linearGradient>
<linearGradient id="spec" x1="0" x2="1"><stop offset="0" stop-color="#e21a1a"/><stop offset=".17" stop-color="#f3ef10"/><stop offset=".34" stop-color="#2fb336"/><stop offset=".55" stop-color="#3fb4ef"/><stop offset=".7" stop-color="#2e3192"/><stop offset=".85" stop-color="#a3238e"/><stop offset="1" stop-color="#e3175a"/></linearGradient><linearGradient id="specv" x1="0" y1="0" x2="0" y2="1"><stop offset="0" stop-color="#fff" stop-opacity=".75"/><stop offset=".35" stop-color="#fff" stop-opacity="0"/><stop offset=".55" stop-color="#000" stop-opacity="0"/><stop offset="1" stop-color="#000" stop-opacity=".95"/></linearGradient></defs>
<rect x="1705.500" y="105.500" width="18" height="18" fill="#fff" stroke="#111"/><path d="M1706 123L1723 106" stroke="#d4142a" stroke-width="2"/>
<rect x="1714" y="114" width="19" height="19" fill="#000"/><rect x="1714.500" y="114.500" width="18" height="18" fill="none" stroke="#fff" stroke-width="0"/><rect x="1720" y="120" width="7" height="7" fill="#d6d6d6"/>
<path d="M1711 138.500l5 2.500v6l-5 2.500-5-2.500v-6z" fill="#fff" stroke="#333"/><path d="M1706 141l5 2.500 5-2.500M1711 143.500v6" fill="none" stroke="#333"/><path d="M1706 141l5 2.500v6l-5-2.500z" fill="#999"/>
<rect x="1721" y="138" width="13" height="13" fill="#3c3c3c"/>
<text x="1744" y="114.0" font-size="10.500" font-family="Liberation Sans, sans-serif" fill="#111">C</text>
<rect x="1757" y="105.5" width="102" height="7" fill="#fff"/><rect x="1758" y="106.5" width="100" height="5" fill="url(#gc)" stroke="#222" stroke-width="0"/>
<path d="M1758 113.0l4 4.500h-8z" fill="#e4e4e4" stroke="#777" stroke-width=".9"/>
<rect x="1864" y="101.5" width="33" height="16" fill="#fff"/>
<text x="1869" y="114.0" font-size="10.500" font-family="Liberation Sans, sans-serif" fill="#111">0</text>
<text x="1900" y="114.0" font-size="10.500" font-family="Liberation Sans, sans-serif" fill="#111">%</text>
<text x="1744" y="132.1" font-size="10.500" font-family="Liberation Sans, sans-serif" fill="#111">M</text>
<rect x="1757" y="123.6" width="102" height="7" fill="#fff"/><rect x="1758" y="124.6" width="100" height="5" fill="url(#gm)" stroke="#222" stroke-width="0"/>
<path d="M1758 131.1l4 4.500h-8z" fill="#e4e4e4" stroke="#777" stroke-width=".9"/>
<rect x="1864" y="119.6" width="33" height="16" fill="#fff"/>
<text x="1869" y="132.1" font-size="10.500" font-family="Liberation Sans, sans-serif" fill="#111">0</text>
<text x="1900" y="132.1" font-size="10.500" font-family="Liberation Sans, sans-serif" fill="#111">%</text>
<text x="1744" y="150.2" font-size="10.500" font-family="Liberation Sans, sans-serif" fill="#111">Y</text>
<rect x="1757" y="141.7" width="102" height="7" fill="#fff"/><rect x="1758" y="142.7" width="100" height="5" fill="url(#gy)" stroke="#222" stroke-width="0"/>
<path d="M1758 149.2l4 4.500h-8z" fill="#e4e4e4" stroke="#777" stroke-width=".9"/>
<rect x="1864" y="137.7" width="33" height="16" fill="#fff"/>
<text x="1869" y="150.2" font-size="10.500" font-family="Liberation Sans, sans-serif" fill="#111">0</text>
<text x="1900" y="150.2" font-size="10.500" font-family="Liberation Sans, sans-serif" fill="#111">%</text>
<text x="1744" y="168.3" font-size="10.500" font-family="Liberation Sans, sans-serif" fill="#111">K</text>
<rect x="1757" y="159.8" width="102" height="7" fill="#fff"/><rect x="1758" y="160.8" width="100" height="5" fill="url(#gk)" stroke="#222" stroke-width="1"/>
<path d="M1858 167.3l4 4.500h-8z" fill="#e4e4e4" stroke="#777" stroke-width=".9"/>
<rect x="1864" y="155.8" width="33" height="16" fill="#fff"/>
<text x="1869" y="168.3" font-size="10.500" font-family="Liberation Sans, sans-serif" fill="#111">100</text>
<text x="1900" y="168.3" font-size="10.500" font-family="Liberation Sans, sans-serif" fill="#111">%</text>
<rect x="1705.500" y="174.500" width="201" height="16" fill="#000" stroke="#111"/>
<rect x="1706" y="175" width="17" height="15" fill="#fff"/><path d="M1707 190L1722 175" stroke="#d4142a" stroke-width="2"/>
<rect x="1723" y="175" width="167" height="15" fill="url(#spec)"/><rect x="1723" y="175" width="167" height="15" fill="url(#specv)"/>
<rect x="1890" y="175" width="16" height="7.500" fill="#fff"/><rect x="1890" y="182.500" width="16" height="7.500" fill="#000"/>
</svg>
<div class="tabs" style="top:131px">
<div class="tab" style="left:0px;width:42px"><span style="left:6px">Pinsel</span></div>
<div class="tab on" style="left:42px;width:55px"><span style="left:6px">Symbole</span></div>
<div class="tab" style="left:97px;width:64px"><span style="left:6px">Grafikstile</span></div>
<svg class="pmenu" width="16" height="8" viewBox="0 0 16 8"><path d="M0 1h5l-2.500 3z" fill="#333"/><path d="M6 .5h9M6 2.500h9M6 4.500h9M6 6.500h9" stroke="#444" stroke-width="1"/></svg>
</div>
<div class="abs" style="left:2px;top:152px;width:211px;height:1px;background:#222"></div>
<div class="abs" style="left:198px;top:153px;width:15px;height:198px;background:#ececec"></div>
<svg class="abs" style="left:198px;top:153px" width="15" height="198" viewBox="0 0 15 198"><path d="M3.500 11L7.500 7l4 4z" fill="#8a8a8a"/><path d="M3.500 187l4 4 4-4z" fill="#8a8a8a"/></svg>
<div class="abs" style="left:2px;top:350px;width:196px;height:1px;background:#222"></div>
<svg class="abs" style="left:0;top:351px" width="215" height="17" viewBox="1701 419 215 17">
<rect x="1712.500" y="422.500" width="7" height="7" fill="#ddd" stroke="#444"/><rect x="1715.500" y="425.500" width="7" height="7" fill="#bbb" stroke="#444"/><path d="M1724 434h3v-3z" fill="#111"/>
<path d="M1751 423c2 4 5 5 9 4M1757 424l3 3-3 3" fill="none" stroke="#555" stroke-width="1.400"/>
<path d="M1778 427h20M1783 424c-3 0-4 6 0 6M1793 424c3 0 4 6 0 6" fill="none" stroke="#999" stroke-width="1.300"/><path d="M1788 421v2M1788 431v2" stroke="#999"/>
<rect x="1814.500" y="422.500" width="11" height="9" fill="#e2e2e2" stroke="#aaa"/><path d="M1817 427h2M1821 427h2" stroke="#aaa"/>
<rect x="1847.500" y="422.500" width="8" height="9" fill="#f4f4f4" stroke="#555"/><rect x="1849" y="426" width="5" height="4" fill="#222"/>
<path d="M1880.500 425v7h6v-7M1879 424.500h9M1882 423h3" fill="#e8e8e8" stroke="#888"/><path d="M1882.500 426v5M1884.500 426v5" stroke="#aaa"/>
<path d="M1912 428v1M1910 430h3M1908 432h5M1906 434h7" stroke="#999" stroke-dasharray="1 1"/>
</svg>
<div class="tabs" style="top:368px">
<div class="tab on" style="left:0px;width:47px"><span style="left:6px">Ebenen</span></div>
<div class="tab" style="left:47px;width:50px"><span style="left:6px">Zeichen</span></div>
<div class="tab" style="left:97px;width:46px"><span style="left:6px">Absatz</span></div>
<svg class="pmenu" width="16" height="8" viewBox="0 0 16 8"><path d="M0 1h5l-2.500 3z" fill="#333"/><path d="M6 .5h9M6 2.500h9M6 4.500h9M6 6.500h9" stroke="#444" stroke-width="1"/></svg>
</div>
<div class="abs" style="left:0;top:389px;width:198px;height:198px;background:#fff"></div>
<div class="abs" style="left:0;top:389px;width:46px;height:198px;background:#d6d6d6"></div>
<div class="abs" style="left:46px;top:389px;width:1px;height:198px;background:#333"></div>
<div class="abs" style="left:198px;top:389px;width:15px;height:198px;background:#ececec"></div>
<div class="lyr" style="top:390.0px">
<div class="abs" style="left:47px;top:-1px;width:151px;height:20px;background:#d4d4d4"></div>
<div class="c1"><svg class="abs" style="left:2px;top:4px" width="13" height="11" viewBox="0 0 13 11"><path d="M.6 5.800C3 2.200 10 2.200 12.400 5.800 10 9.400 3 9.400.6 5.800z" fill="#e9e9e9" stroke="#111" stroke-width="1"/><ellipse cx="6.500" cy="5.800" rx="3.300" ry="3" fill="#0a0a0a"/><circle cx="5.700" cy="4.900" r=".9" fill="#fff"/><path d="M.8 4.200C3.500 .8 9.500 .8 12.200 4.200" fill="none" stroke="#111" stroke-width="1.500"/></svg></div><div class="c2"></div><div class="cb" style="background:#4f4fff"></div>
<svg class="abs" style="left:50px;top:6px" width="11" height="8"><path d="M.5 .5h9l-4.500 6z" fill="#e8ecf6" stroke="#5a6b9a" stroke-width="1"/></svg>
<div class="th" style="left:64px"><svg width="14" height="15" viewBox="0 0 14 15"><path d="M.5 5.500c1 0 1 1 1 2.500M2 7.500a1.600 1.600 0 1 1 3.200 0v1.500c0 .8.500 1 1 1M2 8.500a1.600 1.600 0 0 0 3.200 0M7 9.500c0 1.500 2.500 1.500 2.500 0V7.500a1.500 1.500 0 1 1 1.500 1.500" fill="none" stroke="#222" stroke-width=".8"/></svg></div>
<span class="nm" style="left:84px">Meine Ebene</span>
<div class="abs" style="left:63px;top:19px;width:135px;height:1px;background:#c4c4c4"></div>
<svg class="abs" style="left:172px;top:4px" width="12" height="12"><circle cx="6" cy="6" r="4.300" fill="#fafafa" stroke="#333" stroke-width="1.100"/></svg>
<div class="abs" style="left:189px;top:7px;width:5px;height:5px;background:#4f4fff"></div>
<svg class="abs" style="left:192px;top:-1px" width="6" height="6"><path d="M0 0h6v6z" fill="#111"/></svg>
</div>
<div class="lyr" style="top:410.1px">
<div class="c1"><svg class="abs" style="left:2px;top:4px" width="13" height="11" viewBox="0 0 13 11"><path d="M.6 5.800C3 2.200 10 2.200 12.400 5.800 10 9.400 3 9.400.6 5.800z" fill="#e9e9e9" stroke="#111" stroke-width="1"/><ellipse cx="6.500" cy="5.800" rx="3.300" ry="3" fill="#0a0a0a"/><circle cx="5.700" cy="4.900" r=".9" fill="#fff"/><path d="M.8 4.200C3.500 .8 9.500 .8 12.200 4.200" fill="none" stroke="#111" stroke-width="1.500"/></svg></div><div class="c2"></div><div class="cb" style="background:#4f4fff"></div>
<div class="th" style="left:79px"><svg width="14" height="15" viewBox="0 0 14 15"><path d="M4 10c2 2 6 2 6-2V2" fill="none" stroke="#bbb" stroke-width="1"/></svg></div>
<span class="nm" style="left:99px">&lt;Pfad&gt;</span>
<div class="abs" style="left:78px;top:19px;width:120px;height:1px;background:#bdbdbd"></div>
<svg class="abs" style="left:171px;top:3px" width="14" height="14"><circle cx="7" cy="7" r="5.800" fill="none" stroke="#333" stroke-width="1"/><circle cx="7" cy="7" r="3.600" fill="#f4f4f4" stroke="#333" stroke-width="1"/></svg>
<div class="abs" style="left:188px;top:6px;width:7px;height:7px;background:#4f4fff;border:1px solid #2a2ab0;box-sizing:border-box"></div>
</div>
<div class="lyr" style="top:430.1px">
<div class="c1"><svg class="abs" style="left:2px;top:4px" width="13" height="11" viewBox="0 0 13 11"><path d="M.6 5.800C3 2.200 10 2.200 12.400 5.800 10 9.400 3 9.400.6 5.800z" fill="#e9e9e9" stroke="#111" stroke-width="1"/><ellipse cx="6.500" cy="5.800" rx="3.300" ry="3" fill="#0a0a0a"/><circle cx="5.700" cy="4.900" r=".9" fill="#fff"/><path d="M.8 4.200C3.500 .8 9.500 .8 12.200 4.200" fill="none" stroke="#111" stroke-width="1.500"/></svg></div><div class="c2"></div><div class="cb" style="background:#4f4fff"></div>
<div class="th" style="left:79px"><svg width="14" height="15" viewBox="0 0 14 15"><path d="M2 13c5 0 5-4 5-8s6-4 5 0c-1 2-3 2-4 1" fill="none" stroke="#666" stroke-width="1"/></svg></div>
<span class="nm" style="left:99px">&lt;Pfad&gt;</span>
<div class="abs" style="left:78px;top:19px;width:120px;height:1px;background:#bdbdbd"></div>
<svg class="abs" style="left:172px;top:4px" width="12" height="12"><circle cx="6" cy="6" r="4.300" fill="#fafafa" stroke="#333" stroke-width="1.100"/></svg>
</div>
<div class="lyr" style="top:450.1px">
<div class="c1"><svg class="abs" style="left:2px;top:4px" width="13" height="11" viewBox="0 0 13 11"><path d="M.6 5.800C3 2.200 10 2.200 12.400 5.800 10 9.400 3 9.400.6 5.800z" fill="#e9e9e9" stroke="#111" stroke-width="1"/><ellipse cx="6.500" cy="5.800" rx="3.300" ry="3" fill="#0a0a0a"/><circle cx="5.700" cy="4.900" r=".9" fill="#fff"/><path d="M.8 4.200C3.500 .8 9.500 .8 12.200 4.200" fill="none" stroke="#111" stroke-width="1.500"/></svg></div><div class="c2"></div><div class="cb" style="background:#4f4fff"></div>
<div class="th" style="left:79px"><svg width="14" height="15" viewBox="0 0 14 15"><path d="M2 13c5 0 5-4 5-8s6-4 5 0c-1 2-3 2-4 1" fill="none" stroke="#666" stroke-width="1"/></svg></div>
<span class="nm" style="left:99px">&lt;Pfad&gt;</span>
<div class="abs" style="left:78px;top:19px;width:120px;height:1px;background:#bdbdbd"></div>
<svg class="abs" style="left:172px;top:4px" width="12" height="12"><circle cx="6" cy="6" r="4.300" fill="#fafafa" stroke="#333" stroke-width="1.100"/></svg>
</div>
<div class="lyr" style="top:470.2px">
<div class="c1"><svg class="abs" style="left:2px;top:4px" width="13" height="11" viewBox="0 0 13 11"><path d="M.6 5.800C3 2.200 10 2.200 12.400 5.800 10 9.400 3 9.400.6 5.800z" fill="#e9e9e9" stroke="#111" stroke-width="1"/><ellipse cx="6.500" cy="5.800" rx="3.300" ry="3" fill="#0a0a0a"/><circle cx="5.700" cy="4.900" r=".9" fill="#fff"/><path d="M.8 4.200C3.500 .8 9.500 .8 12.200 4.200" fill="none" stroke="#111" stroke-width="1.500"/></svg></div><div class="c2"></div><div class="cb" style="background:#4f4fff"></div>
<svg class="abs" style="left:66px;top:5px" width="8" height="10"><path d="M1 .5v9l6-4.500z" fill="#e8ecf6" stroke="#5a6b9a" stroke-width="1"/></svg>
<div class="th" style="left:79px"><svg width="14" height="15" viewBox="0 0 14 15"><path d="M0 3c6-2 8 0 8 5s2 5 6 5" fill="none" stroke="#222" stroke-width="1.600"/></svg></div>
<span class="nm" style="left:99px">&lt;Gruppe&gt;</span>
<div class="abs" style="left:78px;top:19px;width:120px;height:1px;background:#bdbdbd"></div>
<svg class="abs" style="left:172px;top:4px" width="12" height="12"><circle cx="6" cy="6" r="4.300" fill="#fafafa" stroke="#333" stroke-width="1.100"/></svg>
</div>
<div class="lyr" style="top:490.2px">
<div class="c1"><svg class="abs" style="left:2px;top:4px" width="13" height="11" viewBox="0 0 13 11"><path d="M.6 5.800C3 2.200 10 2.200 12.400 5.800 10 9.400 3 9.400.6 5.800z" fill="#e9e9e9" stroke="#111" stroke-width="1"/><ellipse cx="6.500" cy="5.800" rx="3.300" ry="3" fill="#0a0a0a"/><circle cx="5.700" cy="4.900" r=".9" fill="#fff"/><path d="M.8 4.200C3.500 .8 9.500 .8 12.200 4.200" fill="none" stroke="#111" stroke-width="1.500"/></svg></div><div class="c2"></div><div class="cb" style="background:#4f4fff"></div>
<svg class="abs" style="left:66px;top:5px" width="8" height="10"><path d="M1 .5v9l6-4.500z" fill="#e8ecf6" stroke="#5a6b9a" stroke-width="1"/></svg>
<div class="th" style="left:79px"><svg width="14" height="15" viewBox="0 0 14 15"><path d="M1 1c2 0 3 1 3 5s2 7 9 7" fill="none" stroke="#222" stroke-width="1.600"/></svg></div>
<span class="nm" style="left:99px">&lt;Gruppe&gt;</span>
<div class="abs" style="left:78px;top:19px;width:120px;height:1px;background:#bdbdbd"></div>
<svg class="abs" style="left:172px;top:4px" width="12" height="12"><circle cx="6" cy="6" r="4.300" fill="#fafafa" stroke="#333" stroke-width="1.100"/></svg>
</div>
<div class="lyr" style="top:510.3px">
<div class="c1"><svg class="abs" style="left:2px;top:4px" width="13" height="11" viewBox="0 0 13 11"><path d="M.6 5.800C3 2.200 10 2.200 12.400 5.800 10 9.400 3 9.400.6 5.800z" fill="#e9e9e9" stroke="#111" stroke-width="1"/><ellipse cx="6.500" cy="5.800" rx="3.300" ry="3" fill="#0a0a0a"/><circle cx="5.700" cy="4.900" r=".9" fill="#fff"/><path d="M.8 4.200C3.500 .8 9.500 .8 12.200 4.200" fill="none" stroke="#111" stroke-width="1.500"/></svg></div><div class="c2"></div><div class="cb" style="background:#4f4fff"></div>
<svg class="abs" style="left:66px;top:5px" width="8" height="10"><path d="M1 .5v9l6-4.500z" fill="#e8ecf6" stroke="#5a6b9a" stroke-width="1"/></svg>
<div class="th" style="left:79px"><svg width="14" height="15" viewBox="0 0 14 15"><path d="M2 1c-1 1-1 2-1 3M12 1c1 1 1 2 1 3M10 14c2-1 3-2 3-4" fill="none" stroke="#999" stroke-width=".8"/></svg></div>
<span class="nm" style="left:99px">&lt;Gruppe&gt;</span>
<div class="abs" style="left:78px;top:19px;width:120px;height:1px;background:#bdbdbd"></div>
<svg class="abs" style="left:172px;top:4px" width="12" height="12"><circle cx="6" cy="6" r="4.300" fill="#fafafa" stroke="#333" stroke-width="1.100"/></svg>
</div>
<div class="lyr" style="top:530.4px">
<div class="c1"><svg class="abs" style="left:2px;top:4px" width="13" height="11" viewBox="0 0 13 11"><path d="M.6 5.800C3 2.200 10 2.200 12.400 5.800 10 9.400 3 9.400.6 5.800z" fill="#e9e9e9" stroke="#111" stroke-width="1"/><ellipse cx="6.500" cy="5.800" rx="3.300" ry="3" fill="#0a0a0a"/><circle cx="5.700" cy="4.900" r=".9" fill="#fff"/><path d="M.8 4.200C3.500 .8 9.500 .8 12.200 4.200" fill="none" stroke="#111" stroke-width="1.500"/></svg></div><div class="c2"></div><div class="cb" style="background:#4f4fff"></div>
<svg class="abs" style="left:66px;top:5px" width="8" height="10"><path d="M1 .5v9l6-4.500z" fill="#e8ecf6" stroke="#5a6b9a" stroke-width="1"/></svg>
<div class="th" style="left:79px"><svg width="14" height="15" viewBox="0 0 14 15"><path d="M10 14V2H5v6h5" fill="none" stroke="#222" stroke-width="1.600"/></svg></div>
<span class="nm" style="left:99px">&lt;Gruppe&gt;</span>
<div class="abs" style="left:78px;top:19px;width:120px;height:1px;background:#bdbdbd"></div>
<svg class="abs" style="left:172px;top:4px" width="12" height="12"><circle cx="6" cy="6" r="4.300" fill="#fafafa" stroke="#333" stroke-width="1.100"/></svg>
</div>
<div class="lyr" style="top:550.4px">
<div class="abs" style="left:47px;top:-1px;width:151px;height:20px;background:#d4d4d4"></div>
<div class="c1"><svg class="abs" style="left:2px;top:4px" width="13" height="11" viewBox="0 0 13 11"><path d="M.6 5.800C3 2.200 10 2.200 12.400 5.800 10 9.400 3 9.400.6 5.800z" fill="#e9e9e9" stroke="#111" stroke-width="1"/><ellipse cx="6.500" cy="5.800" rx="3.300" ry="3" fill="#0a0a0a"/><circle cx="5.700" cy="4.900" r=".9" fill="#fff"/><path d="M.8 4.200C3.500 .8 9.500 .8 12.200 4.200" fill="none" stroke="#111" stroke-width="1.500"/></svg></div><div class="c2"><svg class="abs" style="left:3px;top:3px" width="10" height="12" viewBox="0 0 10 12"><path d="M2.500 6V4a2.500 2.500 0 0 1 5 0v2" fill="none" stroke="#111" stroke-width="1.400"/><rect x="1" y="5.500" width="8" height="6" fill="#222"/><path d="M2 7.500h6M2 9.500h6" stroke="#888" stroke-width=".8"/></svg></div><div class="cb" style="background:#4fff4f"></div>
<svg class="abs" style="left:51px;top:5px" width="8" height="10"><path d="M1 .5v9l6-4.500z" fill="#e8ecf6" stroke="#5a6b9a" stroke-width="1"/></svg>
<div class="th" style="left:64px"><svg width="14" height="15" viewBox="0 0 14 15"><path d="M0 11.500h14" stroke="#9c9" stroke-width="1"/></svg></div>
<span class="nm" style="left:84px">Textbereich ausbl...</span>
<div class="abs" style="left:63px;top:19px;width:135px;height:1px;background:#c4c4c4"></div>
<svg class="abs" style="left:172px;top:4px" width="12" height="12"><circle cx="6" cy="6" r="4.300" fill="#fafafa" stroke="#333" stroke-width="1.100"/></svg>
</div>
<div class="lyr" style="top:570.5px">
<div class="abs" style="left:47px;top:-1px;width:151px;height:20px;background:#d4d4d4"></div>
<div class="c1"></div><div class="c2"></div><div class="cb" style="background:#ff7f1f"></div>
<svg class="abs" style="left:51px;top:5px" width="8" height="10"><path d="M1 .5v9l6-4.500z" fill="#e8ecf6" stroke="#5a6b9a" stroke-width="1"/></svg>
<div class="th" style="left:64px"><svg width="14" height="15" viewBox="0 0 14 15"><path d="M0 3.500h14M0 11.500h14" stroke="#e9a" stroke-width="1"/></svg></div>
<span class="nm" style="left:84px">Anschnitt/Falzlini...</span>
<div class="abs" style="left:63px;top:19px;width:135px;height:1px;background:#c4c4c4"></div>
<svg class="abs" style="left:172px;top:4px" width="12" height="12"><circle cx="6" cy="6" r="4.300" fill="#fafafa" stroke="#333" stroke-width="1.100"/></svg>
</div>
<svg class="abs" style="left:198px;top:389px" width="15" height="198" viewBox="0 0 15 198"><path d="M3.500 12L7.500 8l4 4z" fill="#222"/><rect x="1.500" y="19.500" width="12" height="14" rx="1" fill="#e2e2e2" stroke="#9a9a9a"/><path d="M3.500 187l4 4 4-4z" fill="#222"/></svg>
<div class="abs" style="left:0;top:587px;width:215px;height:17px;background:#d6d6d6"></div>
<span class="pl" style="left:11px;top:589px">3 Ebenen</span>
<svg class="abs" style="left:0;top:587px" width="215" height="17" viewBox="1701 655 215 17">
<circle cx="1790" cy="664" r="4" fill="#e8e8e8" stroke="#666"/><path d="M1790 664v-4a4 4 0 0 1 4 4z" fill="#666"/><path d="M1784 659h2M1785 661h1" stroke="#666"/>
<path d="M1812 662h4M1814.500 660l2 2-2 2" fill="none" stroke="#444"/><path d="M1819.500 661v7h6v-7" fill="none" stroke="#444"/><rect x="1821" y="664" width="4" height="3" fill="#888"/>
<rect x="1847.500" y="659.500" width="8" height="9" fill="#f4f4f4" stroke="#555"/><rect x="1849" y="663" width="5" height="4" fill="#222"/>
<path d="M1880.500 662v7h6v-7M1879 661.500h9M1882 660h3" fill="#e8e8e8" stroke="#666"/><path d="M1882.500 663v5M1884.500 663v5" stroke="#888"/>
<path d="M1912 664v1M1910 666h3M1908 668h5M1906 670h7" stroke="#999" stroke-dasharray="1 1"/>
</svg>
<div class="tabs" style="top:605px">
<div class="tab on" style="left:0px;width:59px"><svg class="abs" style="left:4px;top:4px" width="7" height="10" viewBox="0 0 7 10"><path d="M3.500 0L6.500 3.500H.5zM3.500 9.500L6.500 6H.5z" fill="#222"/></svg><span style="left:14px">Verlauf</span></div>
<div class="tab" style="left:59px;width:70px"><span style="left:6px;letter-spacing:-0.6px">Transparenz</span></div>
<svg class="pmenu" width="16" height="8" viewBox="0 0 16 8"><path d="M0 1h5l-2.500 3z" fill="#333"/><path d="M6 .5h9M6 2.500h9M6 4.500h9M6 6.500h9" stroke="#444" stroke-width="1"/></svg>
</div>
<div class="abs" style="left:8px;top:631px;width:29px;height:29px;background:linear-gradient(90deg,#fff,#111);border:1px solid #111;box-sizing:border-box;box-shadow:0 0 0 1px #f2f2f2"></div>
<div class="abs" style="left:38px;top:630px;width:8px;height:30px;background:linear-gradient(#bbb,#eee);border:1px solid #8a8a8a;box-sizing:border-box"></div>
<svg class="abs" style="left:38px;top:641px" width="8" height="6"><path d="M1 1h6l-3 4z" fill="#111"/></svg>
<span class="pl" style="left:50px;top:636px">Art:</span>
<div class="wf" style="left:69px;top:633px;width:122px;height:18px;border-color:#f0f0f0;box-shadow:inset 0 0 0 1px #d4d4d4"></div>
<div class="abs" style="left:173px;top:635px;width:16px;height:14px;background:#fff"></div>
<svg class="abs" style="left:179px;top:641px" width="9" height="6"><path d="M0 0h8l-4 5z" fill="#111"/></svg>
<svg class="abs" style="left:0;top:664px" width="215" height="22" viewBox="1701 732 215 22">
<rect x="1714.500" y="737.500" width="7" height="5" fill="#bbb" stroke="#888"/><rect x="1722.500" y="744.500" width="7" height="5" fill="#bbb" stroke="#888"/><path d="M1724 738h3v3M1725.500 742l1.500 1.500 1.500-1.500M1720 749h-3v-3M1715.500 745l1.500-1.500 1.500 1.500" fill="none" stroke="#555" stroke-width="1.200"/>
<path d="M1755 746.500h9l-3-8z" fill="none" stroke="#222" stroke-width="1"/><path d="M1759 746a4 4 0 0 0-1-3" fill="none" stroke="#222" stroke-dasharray="1 1"/>
<path d="M1829 737v11M1827 739l2-2 2 2M1827 746l2 2 2-2" fill="none" stroke="#111" stroke-width="1.200"/><ellipse cx="1837" cy="741.500" rx="4.500" ry="3" fill="#e6e6e6" stroke="#555"/><path d="M1831 749.500h10" stroke="#777" stroke-dasharray="1 1"/><path d="M1831 749.500l2-1.500v3zM1841 749.500l-2-1.500v3z" fill="#777"/>
<text x="1816.500" y="743" font-size="9" font-family="Liberation Sans, sans-serif" fill="#777">°</text><text x="1894" y="746" font-size="10" font-family="Liberation Sans, sans-serif" fill="#8a8a8a">%</text>
</svg>
<div class="df" style="left:68px;top:666px;width:45px;height:18px"></div>
<div class="abs" style="left:97px;top:667px;width:15px;height:16px;background:#e6e6e6;border-left:1px solid #c8c8c8;box-sizing:border-box"></div>
<svg class="abs" style="left:102px;top:671px" width="6" height="8"><path d="M1 0v8l4-4z" fill="#7a7a7a"/></svg>
<div class="df" style="left:144px;top:666px;width:47px;height:18px"></div>
<div class="abs" style="left:10px;top:696px;width:167px;height:46px;background:linear-gradient(90deg,#fff 0%,#e4e4e4 18%,#9c9c9c 50%,#5a5a5a 80%,#0a0a0a 100%);border:1px solid #111;box-sizing:border-box;box-shadow:0 0 0 1px #f0f0f0"></div>
<svg class="abs" style="left:182px;top:698px" width="12" height="14" viewBox="0 0 12 14"><path d="M2.500 4v8h7V4M1 3.500h10M4 2h4" fill="#e2e2e2" stroke="#9a9a9a"/><path d="M4.500 5v6M7.500 5v6" stroke="#b4b4b4"/></svg>
<span class="pl" style="left:17px;top:769px;color:#a8a8a8;text-shadow:0 1px 0 #f4f4f4">Deckkraft:</span>
<div class="df" style="left:68px;top:766px;width:45px;height:18px"></div>
<div class="abs" style="left:97px;top:767px;width:15px;height:16px;background:#e6e6e6;border-left:1px solid #c8c8c8;box-sizing:border-box"></div>
<svg class="abs" style="left:102px;top:771px" width="6" height="8"><path d="M1 0v8l4-4z" fill="#7a7a7a"/></svg>
<span class="pl" style="left:115px;top:769px;color:#9a9a9a">%</span>
<span class="pl" style="left:26px;top:793px;color:#a8a8a8;text-shadow:0 1px 0 #f4f4f4">Position:</span>
<div class="df" style="left:68px;top:790px;width:45px;height:18px"></div>
<div class="abs" style="left:97px;top:791px;width:15px;height:16px;background:#e6e6e6;border-left:1px solid #c8c8c8;box-sizing:border-box"></div>
<svg class="abs" style="left:102px;top:795px" width="6" height="8"><path d="M1 0v8l4-4z" fill="#7a7a7a"/></svg>
<span class="pl" style="left:115px;top:793px;color:#9a9a9a">%</span>
<div class="tabs" style="top:825px">
<div class="tab" style="left:0px;width:52px"><span style="left:6px;letter-spacing:-0.6px">Aussehen</span></div>
<div class="tab on" style="left:52px;width:72px"><svg class="abs" style="left:4px;top:4px" width="7" height="10" viewBox="0 0 7 10"><path d="M3.500 0L6.500 3.500H.5zM3.500 9.500L6.500 6H.5z" fill="#222"/></svg><span style="left:14px">Ausrichten</span></div>
<div class="tab" style="left:124px;width:51px"><span style="left:6px">Pathfinde</span></div>
<svg class="pmenu" width="16" height="8" viewBox="0 0 16 8"><path d="M0 1h5l-2.500 3z" fill="#333"/><path d="M6 .5h9M6 2.500h9M6 4.500h9M6 6.500h9" stroke="#444" stroke-width="1"/></svg>
</div>
<span class="pl" style="left:5px;top:850px">Ankerpunkte ausrichten:</span>
<div class="hr" style="top:883px"></div>
<span class="pl" style="left:5px;top:888px">Ankerpunkte verteilen:</span>
<div class="hr" style="top:921px"></div>
<span class="pl" style="left:5px;top:926px">Abstand verteilen:</span>
<span class="pl" style="left:139px;top:928px">Ausrichten an:</span>
<div class="abs" style="left:134px;top:928px;width:1px;height:30px;background:#b4b4b4;border-right:1px solid #e8e8e8"></div>
<svg class="abs" style="left:0;top:862px" width="215" height="105" viewBox="1701 930 215 105">
<defs><linearGradient id="bx" x1="0" y1="0" x2="0" y2="1"><stop offset="0" stop-color="#fff"/><stop offset="1" stop-color="#8e8e8e"/></linearGradient></defs>
<g fill="url(#bx)" stroke="#222" stroke-width="1">
<path d="M1713.500 932v14" fill="none"/><rect x="1715.500" y="933.500" width="6" height="4"/><rect x="1715.500" y="939.500" width="12" height="4"/>
<path d="M1754.500 931v16" fill="none"/><rect x="1751.500" y="933.500" width="6" height="4"/><rect x="1748.500" y="939.500" width="12" height="4"/>
<path d="M1795.500 932v14" fill="none"/><rect x="1787.500" y="933.500" width="6" height="4"/><rect x="1781.500" y="939.500" width="12" height="4"/>
<path d="M1814 933.500h17" fill="none"/><rect x="1816.500" y="935.500" width="4" height="9"/><rect x="1823.500" y="935.500" width="4" height="4"/>
<path d="M1848 939.500h18" fill="none"/><rect x="1850.500" y="935.500" width="4" height="8"/><rect x="1858.500" y="937.500" width="4" height="4"/>
<path d="M1882 945.500h17" fill="none"/><rect x="1884.500" y="934.500" width="4" height="9"/><rect x="1892.500" y="939.500" width="4" height="4"/>
<path d="M1712 971.500h17M1712 978.500h17" fill="none"/><rect x="1716.500" y="972.500" width="8" height="3"/><rect x="1714.500" y="979.500" width="13" height="3"/>
<path d="M1746 973.500h17M1746 980.500h17" fill="none"/><rect x="1750.500" y="971.500" width="8" height="4"/><rect x="1748.500" y="978.500" width="13" height="4"/>
<path d="M1780 975.500h17M1780 982.500h17" fill="none"/><rect x="1784.500" y="971.500" width="8" height="3"/><rect x="1782.500" y="978.500" width="13" height="3"/>
<path d="M1816.500 970v14M1823.500 970v14" fill="none"/><rect x="1817.500" y="972.500" width="3" height="9"/><rect x="1824.500" y="974.500" width="3" height="5"/>
<path d="M1852.500 970v14M1859.500 970v14" fill="none"/><rect x="1850.500" y="972.500" width="4" height="9"/><rect x="1857.500" y="974.500" width="4" height="5"/>
<path d="M1888.500 970v14M1895.500 970v14" fill="none"/><rect x="1884.500" y="972.500" width="3" height="9"/><rect x="1891.500" y="974.500" width="3" height="5"/>
<path d="M1711 1016.500h18M1711 1018.500h18" fill="none" stroke="#444"/><rect x="1716.500" y="1010.500" width="8" height="4"/><rect x="1718.500" y="1020.500" width="4" height="3"/>
<path d="M1751.500 1010v14M1753.500 1010v14" fill="none" stroke="#444"/><rect x="1745.500" y="1011.500" width="3" height="4"/><rect x="1756.500" y="1012.500" width="4" height="9"/>
</g>
<rect x="1776.500" y="1008.500" width="53" height="19" fill="#dedede" stroke="#f2f2f2"/><rect x="1777.500" y="1009.500" width="51" height="17" fill="none" stroke="#c2c2c2"/><rect x="1778" y="1010" width="13" height="16" fill="#ececec"/><path d="M1782 1016l2.500-3 2.500 3zM1782 1020l2.500 3 2.500-3z" fill="#b4b4b4"/>
<text x="1796" y="1022" font-size="10.500" font-family="Liberation Sans, sans-serif" fill="#8c8c8c">2 mm</text>
<rect x="1862.500" y="1010.500" width="12" height="14" fill="#f4f4f4" stroke="#222"/><rect x="1865.500" y="1013.500" width="6" height="8" fill="#999" stroke="#222"/><path d="M1868.500 1010v4M1868.500 1021v4M1862 1017.500h4M1871 1017.500h4" stroke="#222"/><path d="M1879 1015h6l-3 4.500z" fill="#222"/>
</svg>
</div>
<div class="abs" style="left:1684px;top:89px;width:16px;height:946px;background:#efefef"></div>
<svg class="abs" style="left:1684px;top:89px" width="16" height="946" viewBox="1684 89 16 946"><path d="M1688 99l4.500-4.500 4.500 4.500z" fill="#9a9a9a"/><path d="M1688 1008l4.500 4.500 4.500-4.500z" fill="#777"/><defs><linearGradient id="thg" x1="0" x2="1"><stop offset="0" stop-color="#f2f2f2"/><stop offset="1" stop-color="#c6c6c6"/></linearGradient><linearGradient id="thv" x1="0" y1="0" x2="0" y2="1"><stop offset="0" stop-color="#ededed"/><stop offset="1" stop-color="#b9b9b9"/></linearGradient></defs><rect x="1685.500" y="546.500" width="13" height="14" rx="1" fill="url(#thg)" stroke="#8f8f8f"/></svg>
<div class="abs" style="left:65px;top:1019px;width:1635px;height:16px;background:#e9e9e9"></div>
<div class="abs" style="left:67px;top:1020px;width:58px;height:15px;background:#fff;font-size:10px;line-height:15px;color:#111"><span style="position:absolute;left:4px;top:1px">286%</span></div>
<div class="abs" style="left:157px;top:1020px;width:44px;height:15px;background:#fff;font-size:10px;line-height:15px;color:#111"><span style="position:absolute;left:7px;top:1px">1</span></div>
<div class="abs" style="left:235px;top:1020px;width:179px;height:15px;background:#d2d2d2;border:1px solid #bdbdbd;box-sizing:border-box;font-size:10.500px;line-height:13px;color:#111"><span style="position:absolute;left:59px;top:0">Direktauswahl</span></div>
<svg class="abs" style="left:65px;top:1019px" width="1635" height="16" viewBox="65 1019 1635 16">
 <path d="M113 1026h7l-3.500 4z" fill="#111"/><path d="M190 1026h7l-3.500 4z" fill="#111"/>
 <path d="M129.500 1023v8" stroke="#9a9a9a" stroke-width="1.400"/><path d="M135 1023v8l-4-4z" fill="#9a9a9a"/><path d="M151 1023v8l-4-4z" fill="#9a9a9a"/>
 <path d="M208 1023v8l4-4z" fill="#9a9a9a"/><path d="M222 1023v8l4-4z" fill="#9a9a9a"/><path d="M227.500 1023v8" stroke="#9a9a9a" stroke-width="1.400"/>
 <path d="M402.500 1022v10l5.500-5z" fill="#111"/>
 <path d="M424 1023v7l-4-3.500z" fill="#333"/><path d="M1673 1023v7l4-3.500z" fill="#333"/>
 <rect x="1056.500" y="1020.500" width="14" height="13" rx="1.500" fill="url(#thv)" stroke="#8e8e8e"/>
</svg>

</div>
</body></html>
